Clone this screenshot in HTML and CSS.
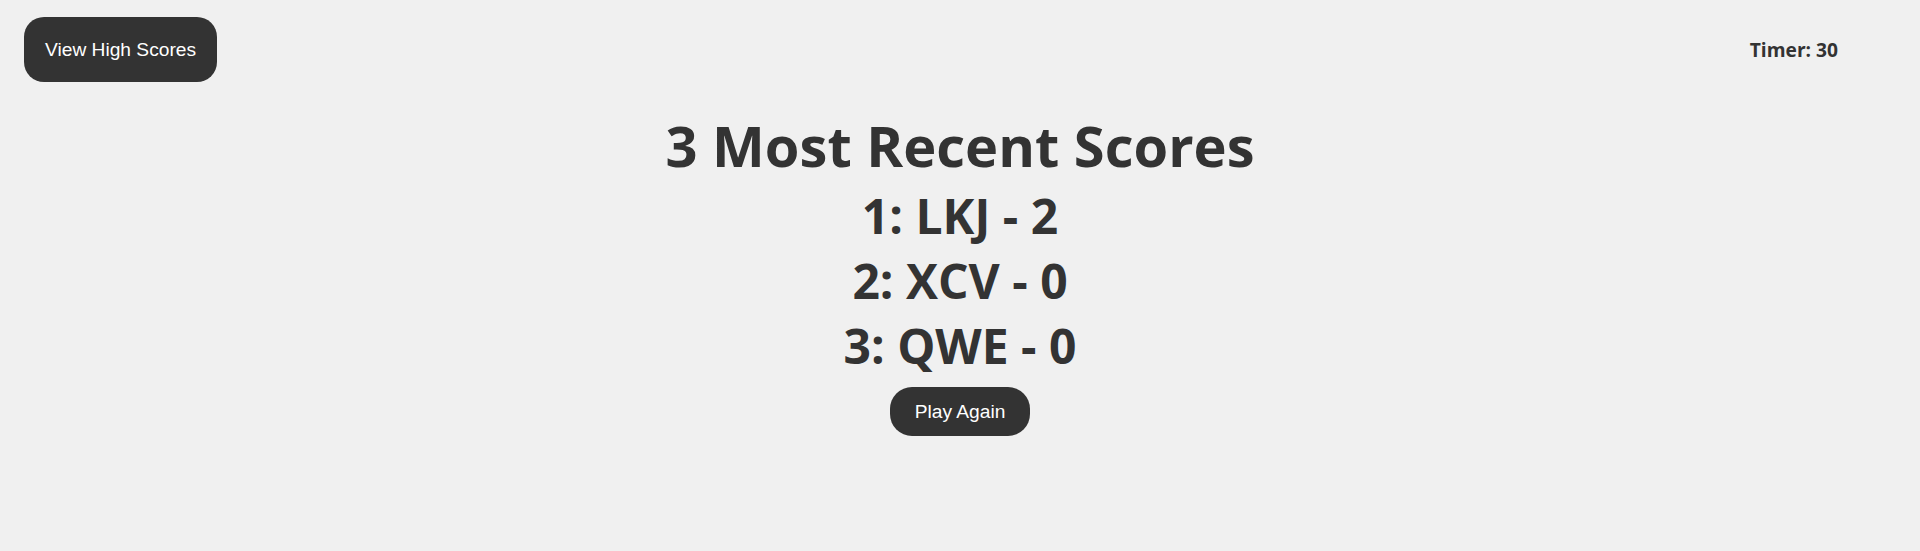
FILE: index.html
```html
<!DOCTYPE html>
<html lang="en">
<head>
<meta charset="utf-8">
<title>Scores</title>
<link rel="stylesheet" href="styles.css">
</head>
<body>
<header class="top-bar">
  <button class="btn btn-high">View High Scores</button>
  <div class="timer">Timer: 30</div>
</header>
<main class="content">
  <section class="scores">
    <h1 class="scores-title">3 Most Recent Scores</h1>
    <p class="score-row">1: LKJ - 2</p>
    <p class="score-row">2: XCV - 0</p>
    <p class="score-row">3: QWE - 0</p>
  </section>
  <button class="btn btn-play">Play Again</button>
</main>
</body>
</html>
```
FILE: styles.css
```css
html, body {
  margin: 0;
  padding: 0;
}
body {
  background: #f0f0f0;
  color: #333333;
  font-family: "Open Sans", sans-serif;
  width: 1920px;
  height: 551px;
  overflow: hidden;
}
.top-bar {
  display: flex;
  justify-content: space-between;
  align-items: center;
  padding: 17px 82px 0 24px;
}
.btn {
  background: #333333;
  color: #ffffff;
  border: none;
  font-family: "Liberation Sans", Arial, sans-serif;
  font-size: 19.2px;
  line-height: 23px;
  cursor: pointer;
}
.btn-high {
  padding: 21px 21px;
  border-radius: 20px;
}
.timer {
  font-weight: 700;
  font-size: 19.2px;
}
.content {
  display: flex;
  flex-direction: column;
  align-items: center;
  margin-top: 25px;
}
.scores {
  width: 100%;
  text-align: center;
}
.scores-title {
  margin: 0;
  font-size: 56px;
  font-weight: 700;
  line-height: normal;
}
.score-row {
  margin: 0;
  font-size: 48px;
  font-weight: 700;
  line-height: normal;
}
.btn-play {
  margin-top: 9px;
  padding: 13px 25px;
  border-radius: 22px;
}
```
